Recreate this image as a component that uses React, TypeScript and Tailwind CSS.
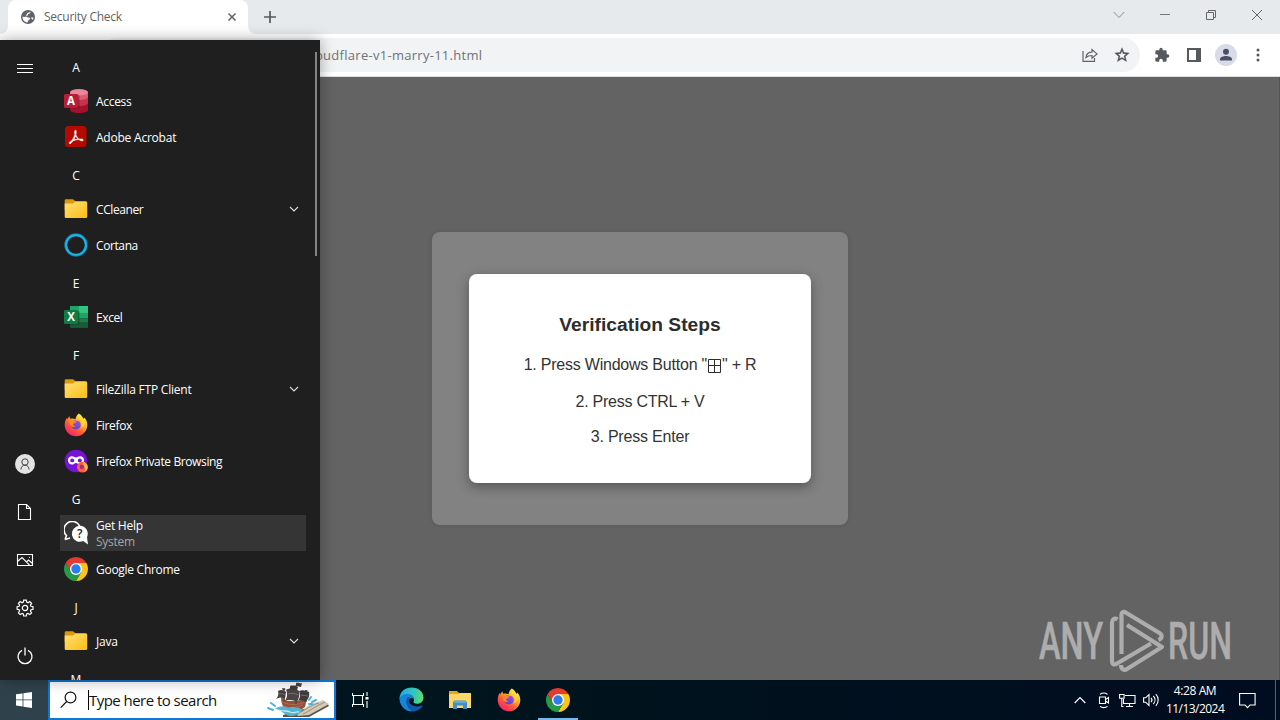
import type { ReactNode } from "react";

const FolderIcon = () => (
  <svg width="24" height="24" viewBox="0 0 24 24">
    <defs>
      <linearGradient id="folder" x1="0" y1="0" x2="1" y2="1">
        <stop offset="0" stopColor="#ffe17a" />
        <stop offset="1" stopColor="#fbbd10" />
      </linearGradient>
    </defs>
    <path d="M.700 3.500a1.300 1.300 0 0 1 1.300-1.300H9l2.500 2H21a2 2 0 0 1 2 2v7H.700z" fill="#dc9a07" />
    <path d="M.700 6.500h8.300L11.500 4.500H22a1.200 1.200 0 0 1 1.200 1.200v14a1.200 1.200 0 0 1-1.200 1.200H2A1.200 1.200 0 0 1 .700 19.700z" fill="url(#folder)" />
  </svg>
);

const ChromeIcon = ({ size = 24 }: { size?: number }) => (
  <svg width={size} height={size} viewBox="2 2 44 44">
    <path d="M4.950 13A22 22 0 0 1 43.050 13H24L14.470 29.500z" fill="#e53a2e" />
    <path d="M43.050 13A22 22 0 0 1 24 46L33.530 29.500 24 13z" fill="#fcc41a" />
    <path d="M24 46A22 22 0 0 1 4.950 13L14.470 29.500H33.530z" fill="#259b48" />
    <circle cx="24" cy="24" r="11" fill="#fff" />
    <circle cx="24" cy="24" r="8.600" fill="#2c7cf0" />
  </svg>
);

const FirefoxIcon = ({ size = 24 }: { size?: number }) => (
  <svg width={size} height={size} viewBox="0 0 24 24">
    <defs>
      <linearGradient id="fox" x1="0.850" y1="0.100" x2="0.250" y2="0.950">
        <stop offset="0" stopColor="#fff04a" />
        <stop offset="0.350" stopColor="#ffb02a" />
        <stop offset="0.650" stopColor="#ff5a38" />
        <stop offset="1" stopColor="#f0246c" />
      </linearGradient>
      <linearGradient id="foxglobe" x1="0.700" y1="0" x2="0.300" y2="1">
        <stop offset="0" stopColor="#a24be8" />
        <stop offset="1" stopColor="#5a49c4" />
      </linearGradient>
    </defs>
    <path d="M14.800.500c3 1.700 3.800 3.600 4.700 5.200.6-.2.900-.6.900-1.100C22.400 6.700 23.300 9.600 23.300 12A11.300 11.300 0 0 1 .7 12c0-3 .8-5.300 2-7.100l.5 1.500C3.900 4.800 4.900 3.600 5.500 3.200c0 1 .3 1.900.8 2.500 1.900-.5 3.900-.2 5.200.6C11.800 4 12.900 2 14.800.500z" fill="url(#fox)" />
    <path d="M7.400 9.300c1.200-1.800 3.300-2.300 5-1.600 2.900-.3 4.700 2.100 4.300 4.700a4.900 4.900 0 0 1-9.500.4c-.4-1.300-.3-2.500.2-3.500z" fill="url(#foxglobe)" />
    <path d="M5.500 8.300c2.300-.9 4.700-.5 7 .3-.5 1.700-2.200 1.800-3.600 2.400 0 1.300 1.100 2.200 2.700 1.900-1.900 2-5 .9-5.500-1.600z" fill="#ff8a22" />
    <path d="M14.800.500c-2 4.200 1.600 6 2.700 8.600 1 2.400.3 5-1.200 6.400 3.300-1.100 4.700-4.100 4-7.200-1.100-2.500-4.300-4.200-5.500-7.800z" fill="#ffe03d" opacity=".75" />
  </svg>
);

const PrivateIcon = () => (
  <svg width="24" height="24" viewBox="0 0 24 24">
    <circle cx="12" cy="12" r="11.300" fill="#7613d8" />
    <path d="M4 11.300c0-2.800 1.700-4 3.900-4 1.800 0 2.500 1.200 4.100 1.200s2.300-1.200 4.100-1.200c2.200 0 3.900 1.200 3.900 4s-1.700 4.300-3.900 4.300c-2 0-2.700-1.700-4.100-1.700s-2.100 1.700-4.100 1.700S4 14.100 4 11.300z" fill="#fff" />
    <ellipse cx="8.200" cy="11.400" rx="2" ry="1.900" fill="#7613d8" />
    <ellipse cx="15.800" cy="11.400" rx="2" ry="1.900" fill="#7613d8" />
    <g transform="translate(12.500 12.300) scale(.49)">
      <circle cx="12" cy="12" r="11" fill="#ff5b3d" />
      <path d="M14 0c4 3 9 6 9 12 0 5-4 9-7 10 3-6 2-10-4-14z" fill="#ffbd32" />
      <circle cx="11" cy="11" r="4.500" fill="#a22a91" />
    </g>
  </svg>
);

const AccessIcon = () => (
  <svg width="24" height="24" viewBox="0 0 24 24">
    <path d="M6 3v18c0 1.800 4 3 9 3s9-1.200 9-3V3z" fill="#a4112d" />
    <path d="M6 3v11c0 1.500 4 3 9 3s9-1.500 9-3V3z" fill="#c9324c" />
    <path d="M6 3v5c0 1.500 4 3 9 3s9-1.500 9-3V3z" fill="#dc5c73" />
    <ellipse cx="15" cy="3.200" rx="9" ry="3.200" fill="#e9879a" />
    <rect x="6" y="6" width="9.500" height="14" rx="1" fill="#7d0b22" opacity=".55" />
    <rect y="5" width="14" height="14" rx="1.200" fill="#b81c38" />
    <text x="7" y="16" textAnchor="middle" fontFamily="Open Sans, sans-serif" fontWeight="700" fontSize="11.500" fill="#fff">A</text>
  </svg>
);

const ExcelIcon = () => (
  <svg width="24" height="24" viewBox="0 0 24 24">
    <path d="M6 1h9v7H6z" fill="#21a366" />
    <path d="M15 1h9v7h-9z" fill="#33c481" />
    <path d="M6 8h9v14.500H6z" fill="#107c41" />
    <path d="M15 8h9v5.500h-9z" fill="#21a366" />
    <path d="M15 13.500h9v9h-9z" fill="#17804a" />
    <path d="M6 17h18v5.500H6z" fill="#185c37" />
    <rect x="6" y="6" width="9.500" height="14" rx="1" fill="#07401f" opacity=".5" />
    <rect y="5" width="14" height="14" rx="1.200" fill="#107c41" />
    <text x="7" y="16" textAnchor="middle" fontFamily="Open Sans, sans-serif" fontWeight="700" fontSize="11.500" fill="#fff">X</text>
  </svg>
);

const AcrobatIcon = () => (
  <svg width="24" height="24" viewBox="0 0 24 24">
    <rect x="1" y="1" width="21.500" height="21" rx="3.600" fill="#b30b00" />
    <path d="M11.300 5.200c1.300-.4 1.200 2.300.6 4.500.9 2.400 2.400 4 3.800 4.400 2.500-.5 4.200.3 3.400 1.400-.8.900-2.700.2-4.300-1-2.100.1-4.200.6-6 1.400-1.200 2-2.600 3.300-3.500 2.700-.8-.8.700-2.200 2.800-3.200 1.300-2.300 2.300-4.300 2.800-6.200-.6-1.900-.5-3.700.4-4zM11.600 10.900c-.5 1.400-1.100 2.700-1.800 3.900 1.400-.5 2.700-.8 4.100-.9-.9-.9-1.700-1.900-2.300-3z" fill="#fff" stroke="#fff" strokeWidth=".5" />
  </svg>
);

const CortanaIcon = () => (
  <svg width="24" height="24" viewBox="0 0 24 24">
    <circle cx="12" cy="12" r="10.200" fill="none" stroke="#0b86b8" strokeWidth="3" />
    <circle cx="12" cy="12" r="9.900" fill="none" stroke="#22b5e2" strokeWidth="1.700" />
  </svg>
);

const HelpIcon = () => (
  <svg width="24" height="24" viewBox="0 0 24 24">
    <path d="M1 18.500l1.500-4A8.200 8.200 0 1 1 15.800 5.500M1 18.500l5-1.500" fill="none" stroke="#fff" strokeWidth="1.600" />
    <path d="M16 4.800a8 8 0 0 1 7 11.400l1 7.300-4.800-3.400A8 8 0 1 1 16 4.800z" fill="#fff" />
    <text x="15.800" y="17.200" textAnchor="middle" fontFamily="Open Sans, sans-serif" fontWeight="600" fontSize="12" fill="#222">?</text>
  </svg>
);

type Entry = { label: string; icon?: ReactNode; folder?: boolean; sub?: string; track?: string };

const entries: Entry[] = [
  { label: "A" },
  { label: "Access", icon: <AccessIcon />, track: "tracking-[-0.3px]" },
  { label: "Adobe Acrobat", icon: <AcrobatIcon />, track: "tracking-[-0.22px]" },
  { label: "C" },
  { label: "CCleaner", icon: <FolderIcon />, folder: true, track: "tracking-[-0.4px]" },
  { label: "Cortana", icon: <CortanaIcon />, track: "tracking-[-0.4px]" },
  { label: "E" },
  { label: "Excel", icon: <ExcelIcon />, track: "tracking-[-0.4px]" },
  { label: "F" },
  { label: "FileZilla FTP Client", icon: <FolderIcon />, folder: true, track: "tracking-[-0.22px]" },
  { label: "Firefox", icon: <FirefoxIcon />, track: "tracking-[-0.35px]" },
  { label: "Firefox Private Browsing", icon: <PrivateIcon />, track: "tracking-[-0.38px]" },
  { label: "G" },
  { label: "Get Help", icon: <HelpIcon />, sub: "System", track: "tracking-[-0.25px]" },
  { label: "Google Chrome", icon: <ChromeIcon />, track: "tracking-[-0.28px]" },
  { label: "J" },
  { label: "Java", icon: <FolderIcon />, folder: true, track: "tracking-[-0.2px]" },
  { label: "M" },
];

function MenuRow({ e }: { e: Entry }) {
  if (!e.icon) {
    return <div className="flex h-9 w-8 shrink-0 items-center justify-center pt-1.5 text-[12px]">{e.label}</div>;
  }
  return (
    <div className={`flex h-9 w-[246px] shrink-0 items-center pl-1 pr-1.5 ${e.sub ? "bg-[#353535]" : ""}`}>
      {e.icon}
      <div className={`ml-2 flex-1 whitespace-nowrap text-[12px] leading-4 ${e.track} ${e.sub ? "pt-0.5" : "pt-[2px]"}`}>
        <div>{e.label}</div>
        {e.sub && <div className="text-[#a5a5a5]">{e.sub}</div>}
      </div>
      {e.folder && (
        <svg width="12" height="12" viewBox="0 0 12 12" fill="none" stroke="#ddd" strokeWidth="1.100">
          <path d="M2 4l4 4 4-4" />
        </svg>
      )}
    </div>
  );
}

function StartMenu() {
  return (
    <div className="absolute left-0 top-10 flex h-[640px] w-80 overflow-hidden bg-[#1f1f1f] text-white shadow-[0_0_14px_rgba(0,0,0,0.35)]">
      <div className="flex w-[50px] flex-col items-center pb-[14px] pt-5">
        <svg width="16" height="16" viewBox="0 0 16 16" stroke="#fff" strokeWidth="1">
          <path d="M0 4.500h16M0 8.500h16M0 12.500h16" />
        </svg>
        <div className="mt-auto flex flex-col items-center gap-7">
          <svg width="20" height="20" viewBox="0 0 20 20" fill="none">
            <circle cx="10" cy="10" r="10" fill="#e3e3e3" />
            <circle cx="10" cy="8" r="3.200" stroke="#444" />
            <path d="M5.900 15.500c.2-2.700 1.700-4.300 4.100-4.300s3.900 1.600 4.100 4.300" stroke="#444" />
          </svg>
          <svg width="20" height="20" viewBox="0 0 20 20" fill="none" stroke="#fff" strokeWidth="1.100">
            <path d="M3.500 2.500h8l4 4v11h-12zM11.500 2.500v4h4" />
          </svg>
          <svg width="20" height="20" viewBox="0 0 20 20" fill="none" stroke="#fff" strokeWidth="1.100">
            <path d="M2.500 4.500h15v11h-15zM2.500 11.500l4.500-4 7.500 7.500M11.500 12l2-2 4 3.500" />
            <circle cx="14.500" cy="7.300" r=".6" fill="#fff" stroke="none" />
          </svg>
          <svg width="20" height="20" viewBox="0 0 20 20" fill="none" stroke="#fff" strokeWidth="1.200">
            <path d="M8.700 2.500h2.600l.4 2 1.300.6 1.800-1.200 1.800 1.800-1.200 1.800.6 1.200 2 .4v2.600l-2 .4-.6 1.300 1.200 1.800-1.800 1.800-1.800-1.200-1.300.6-.4 2H8.700l-.4-2-1.200-.6-1.900 1.200-1.800-1.800 1.200-1.800-.5-1.300-2-.4V9.100l2-.4.500-1.200-1.200-1.800 1.800-1.800 1.900 1.200 1.200-.6z" transform="translate(0 -.4)" />
            <circle cx="10" cy="10" r="2.700" />
          </svg>
          <svg width="20" height="20" viewBox="0 0 20 20" fill="none" stroke="#fff" strokeWidth="1.300">
            <path d="M7 4.300a7 7 0 1 0 6 0M10 1.500v8" />
          </svg>
        </div>
      </div>
      <div className="ml-[10px] flex h-[640px] w-[246px] flex-col overflow-hidden pt-[7px]">
        {entries.map((e) => (
          <MenuRow key={e.label} e={e} />
        ))}
      </div>
      <div className="ml-[9px] mt-3 h-[204px] w-[2px] bg-[#848484]" />
    </div>
  );
}

function Ship() {
  return (
    <svg width="64" height="36" viewBox="0 0 64 36">
      <path d="M16 33l24-7 20-5 2 3-20 11H16z" fill="#5d5446" />
      <path d="M32 31c5-2 7-7 12-9 4-2 9-2 12-4l6 4-20 11-12 1z" fill="#d3cab6" />
      <path d="M36 32c7-3 11-7 22-12M34 30c6-3 8-6 18-9" stroke="#8f8572" strokeWidth=".9" fill="none" />
      <path d="M14 15l6 4h11l9-3-2 9-6 4H20c-4-3-6-8-6-14z" fill="#93503a" />
      <path d="M14 19c6 4 15 5 24 1M17 24c6 2 12 2 19-1" stroke="#b8704f" fill="none" strokeWidth=".8" />
      <path d="M7 26c5 0 8-3 12-1s5-1 8 0 6 0 8 3c-1 4-7 6-12 6-6-1-8-6-16-8z" fill="#55b3cf" />
      <path d="M12 28c5 2 7 0 11 2s5-1 9 0" stroke="#c4eaf2" strokeWidth="1.300" fill="none" />
      <path d="M1 26l5 2M4 21l4 3M42 18l2-3M45 20l4-2M42 22l3 0" stroke="#4cb3da" strokeWidth="2" strokeLinecap="round" />
      <path d="M29 3v19M17 6v14M39 8v12" stroke="#5a4338" strokeWidth="1.200" />
      <path d="M11 9c3-2 6-1 8 1l-1 7c-3-2-6-2-9 0 2-2 3-5 2-8z" fill="#454041" />
      <path d="M19 8c3-2 9-2 13 1 1 4 0 7-2 11-3-2-8-3-12-1 2-3 3-7 1-11z" fill="#4b4546" />
      <path d="M32 9c4-2 7 0 10 1 1 4-1 8-4 10-2-2-5-2-7-1 2-3 3-6 1-10zM23 4c3-1 6 0 8 1l-1 3-7 0z" fill="#3f3b3c" />
      <path d="M29 1c3-1 4 1 6 0l-1 4-5-1zM15 6l4 1-3 2M38 8l4 1-4 1" fill="#4a4344" />
      <path d="M21 12c3-1 7-1 10 1M12 12c2-1 4 0 6 1M34 13l7 1" stroke="#8b817c" strokeWidth=".7" fill="none" />
    </svg>
  );
}

function Taskbar() {
  return (
    <div className="flex h-10 shrink-0 bg-gradient-to-r from-[#001820] via-[#00131d] to-[#000c20] text-white">
      <div className="flex w-12 items-center justify-center bg-[#2f424b]">
        <svg width="16" height="16" viewBox="0 0 16 16" fill="#fff">
          <path d="M0 2.300l6.600-.9v6.100H0zM7.400 1.300L16 0v7.500H7.400zM0 8.300h6.600v6.100L0 13.500zM7.400 8.300H16v7.600l-8.600-1.200z" />
        </svg>
      </div>
      <div className="flex w-[288px] items-center border-2 border-[#0f77d0] bg-white pl-[10px] pr-[3px]">
        <svg width="17" height="18" viewBox="0 0 17 18" fill="none" stroke="#111" strokeWidth="1.200">
          <circle cx="10.500" cy="6.500" r="5.400" />
          <path d="M6.700 10.500L.700 16.700" />
        </svg>
        <div className="ml-[11px] h-5 w-px bg-black" />
        <div className="flex-1 whitespace-nowrap pt-px text-[15px] tracking-[-0.54px] text-[#111]">Type here to search</div>
        <Ship />
      </div>
      <div className="flex w-12 items-center justify-center">
        <svg width="17" height="16" viewBox="0 0 17 16" fill="none" stroke="#fff" strokeWidth="1.100">
          <path d="M.500 1v2.500h11V1M.500 15v-2.500h11V15M1.500 3.500v9M10.500 3.500v9M15 0v4M15 9v7" />
          <path d="M13.500 5h3v2.500h-3z" fill="#fff" stroke="none" />
        </svg>
      </div>
      <div className="flex w-[54px] items-center justify-center pb-px">
        <svg width="25" height="25" viewBox="0 0 24 24">
          <defs>
            <linearGradient id="edgeTop" x1="0" y1=".4" x2="1" y2=".5">
              <stop offset="0" stopColor="#25a9e5" />
              <stop offset=".6" stopColor="#31c7ba" />
              <stop offset="1" stopColor="#62dc62" />
            </linearGradient>
          </defs>
          <path d="M.5 10C1.500 4 6 .5 12 .5c7 0 11.500 4.500 11.500 9.500 0 4-3 6-6 6s-4-1-3.500-2.200C15.500 11 13 7.500 9 7.500 5 7.500 1 9.500.5 12z" fill="url(#edgeTop)" />
          <path d="M.5 12c0-3 3.500-5.500 8-5.200 3.500.2 6 2.700 6 5.200-1-2-4-2-5 0-2 4 1 10 6 11A12 12 0 0 1 .5 12z" fill="#1785d5" />
          <path d="M8.500 9.500c-3.500 3-1.500 11.500 5 13.700 4 .3 7-2 9-4.700.5-.7-.2-1-.8-.7C16 20 10.500 17.500 9.700 14c-.3-1.500 0-3 1-4.200z" fill="#1458a8" />
        </svg>
      </div>
      <div className="flex w-11 items-center justify-center">
        <svg width="22" height="20" viewBox="0 0 22 20">
          <path d="M0 1h8l2 2h12v8H0z" fill="#e6a51e" />
          <path d="M0 4h9l2-1h11v15H0z" fill="#ffd766" />
          <path d="M4 19v-7l1.500-1.500h11L18 12v7h-4v-3.500H8V19z" fill="#3d91c8" />
          <path d="M5 12h12" stroke="#86c5e8" />
        </svg>
      </div>
      <div className="flex w-[53px] items-center justify-center pb-px"><FirefoxIcon /></div>
      <div className="flex w-[45px] flex-col items-center justify-between pl-px pt-2">
        <ChromeIcon />
        <div className="h-[2px] w-10 bg-[#76b9ed]" />
      </div>
      <div className="ml-auto flex items-center">
        <svg width="12" height="8" viewBox="0 0 12 8" fill="none" stroke="#fff" strokeWidth="1.200"><path d="M.700 7L6 1.700 11.300 7" /></svg>
        <svg className="ml-3" width="12" height="18" viewBox="0 0 12 18" fill="none" stroke="#fff" strokeWidth="1.100">
          <path d="M1.500 6h6v6.500h-6zM7.500 8.500l3-2v5.500l-3-2M2 3.300c2-1.700 5.500-1.700 7.500 0M2 15.300c2 1.700 5.500 1.700 7.500 0" />
        </svg>
        <svg className="ml-[9px]" width="17" height="15" viewBox="0 0 17 15" fill="none" stroke="#fff" strokeWidth="1.100">
          <path d="M6 2.500h10v8H4.500V6M10.500 10.500v3M7 13.500h7M.6 1.500h4.500v3.700H.6zM2.800 5.200v8.300h1.700" />
        </svg>
        <svg className="ml-[7px]" width="17" height="14" viewBox="0 0 17 14" fill="none" stroke="#fff" strokeWidth="1.100">
          <path d="M.6 4.800h2L6 1.500v11L2.600 9.200h-2zM8 4.800c1.100 1.200 1.100 3.200 0 4.400M10.300 3c2.200 2.300 2.200 5.700 0 8M12.800 1.200c3.200 3.400 3.200 8.200 0 11.600" />
        </svg>
        <div className="ml-[6px] w-[58px] whitespace-nowrap text-center text-[12px] leading-[18px]">
          <div className="tracking-[-0.4px]">4:28 AM</div>
          <div className="tracking-[-0.55px]">11/13/2024</div>
        </div>
        <svg className="ml-[15px]" width="17" height="17" viewBox="0 0 17 17" fill="none" stroke="#fff" strokeWidth="1.100"><path d="M.600 1.500h15.500v11.500H11l-2.500 2.700L6 13H.600z" /></svg>
        <div className="ml-[19px] h-10 w-px bg-[#56606c]" />
        <div className="w-1" />
      </div>
    </div>
  );
}

function BrowserChrome() {
  return (
    <>
      <div className="flex h-[34px] shrink-0 bg-[#e7eaed]">
        <div className="w-2 bg-white"><div className="h-full rounded-br-lg bg-[#e7eaed]" /></div>
        <div className="flex w-60 items-center rounded-t-lg bg-white pl-[13px] pr-[11px]">
          <svg width="14" height="14" viewBox="0 0 14 14">
            <circle cx="7" cy="7" r="7" fill="#5f6368" />
            <path d="M9.500 1.800c.2 1.500-1 2-2.300 2.300-.2 1.700-.9 1.700-2 1.700-.3 1.300.3 1.700 2.300 1.700 2 .1 2 2-.2 2.700L6.500 12.500C3 12 1.500 9.500 1.600 6.700l3 .2C4.700 5 6 4.800 6.200 3.300c1.200-.6 2.100-1.100 3.300-1.500zM10 7.500h2.500l-.8 2.400c-.7-.8-1.500-1.200-1.700-2.400z" fill="#fff" />
          </svg>
          <span className="ml-[9px] flex-1 text-[12px] tracking-[-0.26px] text-[#5f6368]">Security Check</span>
          <svg width="10" height="10" viewBox="0 0 10 10" stroke="#5f6368" strokeWidth="1.500"><path d="M1.500 1.500l7 7M8.500 1.500l-7 7" /></svg>
        </div>
        <div className="w-2 bg-white"><div className="h-full rounded-bl-lg bg-[#e7eaed]" /></div>
        <div className="flex w-7 items-center justify-center">
          <svg width="12" height="12" viewBox="0 0 12 12" stroke="#55595e" strokeWidth="1.700"><path d="M6 0v12M0 6h12" /></svg>
        </div>
        <div className="ml-auto flex h-[29px] items-center">
          <svg className="mr-[35px]" width="12" height="8" viewBox="0 0 12 8" fill="none" stroke="#8a8d90"><path d="M.700 1L6 6.500 11.300 1" /></svg>
          <svg className="mr-9" width="10" height="10" viewBox="0 0 10 10" stroke="#777"><path d="M0 4.500h10" /></svg>
          <svg className="mr-9" width="10" height="10" viewBox="0 0 10 10" fill="none" stroke="#666"><path d="M.500 2.500h7v7h-7zM2.500 2.500v-2h7v7h-2" /></svg>
          <svg className="mr-[18px]" width="10" height="10" viewBox="0 0 10 10" stroke="#666"><path d="M0 0l10 10M10 0L0 10" /></svg>
        </div>
      </div>
      <div className="flex h-[43px] shrink-0 items-center border-b border-[#dedfe0] bg-white">
        <div className="ml-[100px] flex h-[34px] w-[1040px] items-center rounded-full bg-[#f1f3f4] pr-[10px]">
          <span className="ml-[215px] flex-1 whitespace-nowrap pt-px text-[13px] tracking-[0.28px] text-[#6f7378]">oudflare-v1-marry-11.html</span>
          <svg width="16" height="16" viewBox="0 0 16 16" fill="none" stroke="#5f6368" strokeWidth="1.200">
            <path d="M1 4v10.400h11.500V11M4 10.500c.3-3.700 2.700-5.300 6-5.300V2.500l5 4.400-5 4.300V8.500c-2.600 0-4.500.5-6 2z" />
          </svg>
          <svg className="ml-4" width="16" height="16" viewBox="1 1 22 22" fill="#4d5156" stroke="#4d5156" strokeWidth=".5">
            <path d="M22 9.240l-7.190-.62L12 2 9.190 8.630 2 9.240l5.460 4.730L5.820 21 12 17.270 18.180 21l-1.630-7.030L22 9.240zM12 15.400l-3.760 2.270 1-4.280-3.320-2.880 4.380-.38L12 6.100l1.710 4.040 4.380.38-3.320 2.880 1 4.280L12 15.400z" />
          </svg>
        </div>
        <svg className="ml-[14px]" width="16" height="16" viewBox="0 0 24 24" fill="#55595e">
          <path d="M20.500 11H19V7a2 2 0 0 0-2-2h-4V3.500a2.500 2.500 0 0 0-5 0V5H4a2 2 0 0 0-2 2v3.800h1.500a2.700 2.700 0 0 1 0 5.400H2V20a2 2 0 0 0 2 2h3.800v-1.500a2.700 2.700 0 0 1 5.400 0V22H17a2 2 0 0 0 2-2v-4h1.500a2.500 2.500 0 0 0 0-5z" />
        </svg>
        <svg className="ml-[17px]" width="14" height="14" viewBox="0 0 14 14"><path d="M0 0h14v14H0zM2 2v10h7V2z" fill="#55595e" fillRule="evenodd" /></svg>
        <svg className="ml-[14px]" width="22" height="22" viewBox="0 0 22 22">
          <circle cx="11" cy="11" r="11" fill="#d9dce8" />
          <circle cx="11" cy="7.700" r="3" fill="#495067" />
          <path d="M5 16.500v-1.300c0-2 3.500-3.200 6-3.200s6 1.200 6 3.200v1.300z" fill="#495067" />
        </svg>
        <svg className="ml-[19px]" width="4" height="14" viewBox="0 0 4 14" fill="#55595e"><circle cx="2" cy="2" r="1.500" /><circle cx="2" cy="7" r="1.500" /><circle cx="2" cy="12" r="1.500" /></svg>
      </div>
    </>
  );
}

function Watermark() {
  return (
    <svg className="absolute left-[1034px] top-[531px]" width="230" height="66" viewBox="0 0 230 66" fill="none">
      <g fill="#adadad" stroke="#adadad" strokeWidth=".5" fontFamily="Roboto, sans-serif" fontWeight="500" fontSize="52">
        <text x="5" y="51" textLength="64" lengthAdjust="spacingAndGlyphs">ANY</text>
        <text x="134" y="51" textLength="64" lengthAdjust="spacingAndGlyphs">RUN</text>
      </g>
      <g stroke="#adadad" strokeWidth="4.200" strokeLinejoin="round">
        <path d="M83.500 11.500c-3-2-5.500 0-5.500 3v38c0 4 2 5 5 3l34-20" />
        <path d="M87.500 46V7c0-3 2-4 5-2l33 20c3 2 3 5-1 7" />
        <path d="M93 17l35 22-35 22c-3 2-6 0-6-4" />
      </g>
    </svg>
  );
}

export default function App() {
  return (
    <div className="relative flex h-[720px] w-[1280px] flex-col overflow-hidden bg-white font-['Open_Sans','Noto_Sans',sans-serif]">
      <BrowserChrome />
      <main className="relative flex flex-1 items-center justify-center bg-[#636363]">
        <div className="flex h-[293px] w-[416px] items-center justify-center rounded-lg bg-[#828282] shadow-[0_0_4px_rgba(0,0,0,0.12)]">
          <div className="h-[209px] w-[342px] rounded-lg bg-white pt-[39px] text-center font-['Liberation_Sans',sans-serif] text-[#333] shadow-[0_4px_12px_rgba(0,0,0,0.35)]">
            <h2 className="text-[19.2px] font-bold leading-[23px] tracking-[0.03px] text-[#2d2d2d]">Verification Steps</h2>
            <p className="mt-[18px] flex items-center justify-center whitespace-pre text-[16px] leading-[22px] tracking-[-0.22px]">
              <span>1. Press Windows Button "</span>
              <svg className="mt-[1px]" width="15" height="14" viewBox="0 0 15 14" fill="none" stroke="#2d2d2d"><path d="M1.500.500h12v13h-12zM7.500.500v13M1.500 6.500h12" /></svg>
              <span>" + R</span>
            </p>
            <p className="mt-[15px] text-[16px] leading-[22px] tracking-[-0.25px]">2. Press CTRL + V</p>
            <p className="mt-[13px] text-[16px] leading-[22px] tracking-[-0.2px]">3. Press Enter</p>
          </div>
        </div>
        <Watermark />
        <div className="absolute right-0 top-0 h-full w-px bg-[#555]" />
      </main>
      <Taskbar />
      <StartMenu />
    </div>
  );
}
